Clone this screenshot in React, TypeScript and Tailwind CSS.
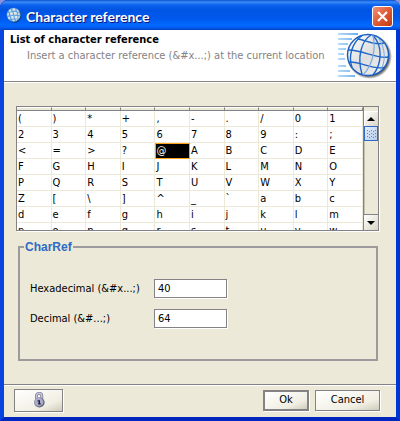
import { useState } from "react";

const FIRST_CODE = 40;
const COLUMNS = 10;
const ROWS = 8;

const rows = Array.from({ length: ROWS }, (_, r) =>
  Array.from({ length: COLUMNS }, (_, c) => FIRST_CODE + r * COLUMNS + c)
);

// speed lines on the left of the header globe: [y, x end]
const streaks = [
  [2, 20],
  [7, 14],
  [12, 10],
  [17, 8],
  [22, 6],
  [27, 7],
  [34, 8],
  [39, 12],
  [44, 17],
];

function TitleGlobe() {
  return (
    <svg viewBox="0 0 16 16" className="h-4 w-4 shrink-0" aria-hidden="true">
      <circle cx="8.6" cy="8.8" r="7" fill="#10408c" />
      <circle cx="7.6" cy="7.8" r="7" fill="#5f9fdc" />
      <g fill="#dfe8ea">
        <path d="M3 3.4 5 2l.4 2-2.2 1.2zM6.4 1.6 9 1.4l.6 2-3 .4zM10.4 2l2 1.4.6 1.8-2-1z" />
        <path d="M1.2 6.4 2.6 5.8 3 8.2 1.4 8.8zM4 5.6l2.4-.6.6 2.8-2.6.4zM7.6 4.8l2.8.2.8 2.6-3 .2zM11.6 5.6l1.8.8.4 2-1.6-.6z" />
        <path d="M1.8 10 3.4 9.4l1 2.2-1.4.8zM4.8 9.2l2.6-.4.6 2.6-2.4.4zM8.6 8.8l2.8.2.2 2.4-2.6.2zM12.4 9.2l1.6.2-1 2-.8.2zM6 12.8l2.4-.4.4 1.8-1.6 0zM9.6 12.4l2.2-.4-1.6 1.8z" />
      </g>
    </svg>
  );
}

function HeaderGlobe() {
  return (
    <svg viewBox="0 0 56 50" className="h-[50px] w-14 shrink-0" aria-hidden="true">
      <defs>
        <linearGradient id="streak" x1="0" x2="20" y1="0" y2="0" gradientUnits="userSpaceOnUse">
          <stop offset="0" stopColor="#b9dcf9" />
          <stop offset="1" stopColor="#6aaef0" />
        </linearGradient>
        <linearGradient id="ball" x1="0" x2="1" y1="0" y2="1">
          <stop offset="0" stopColor="#ffffff" />
          <stop offset="0.5" stopColor="#dedede" />
          <stop offset="1" stopColor="#f2f2f2" />
        </linearGradient>
        <radialGradient id="shade">
          <stop offset="0.85" stopColor="#555555" />
          <stop offset="1" stopColor="#555555" stopOpacity="0" />
        </radialGradient>
      </defs>
      {streaks.map(([y, end]) => (
        <rect key={y} x="0" y={y - 1} width={end} height="2" fill="url(#streak)" />
      ))}
      <circle cx="31.5" cy="24.5" r="22.5" fill="url(#shade)" />
      <circle cx="30" cy="23" r="20.5" fill="url(#ball)" stroke="#1a5fc0" strokeWidth="1.4" />
      <g fill="none" stroke="#1d66c8" strokeWidth="1.4">
        <path d="M19 7C26 7 36 14 46 11" />
        <path d="M10 18C22 17 38 27 50 25" />
        <path d="M11 30C22 29 34 38 46 35.500" />
        <path d="M33 3C23 9 19 26 24 42" />
        <path d="M24 3.500C14 11 10 24 14 35.500" />
        <path d="M35 3.500C45 14 44 32 35 43" />
      </g>
      <path d="M35 3.500C38 16 35 33 25 43" fill="none" stroke="#7aa9e0" strokeWidth="1.200" />
      <path d="M40 5.500C48 16 48 31 42 39" fill="none" stroke="#7aa9e0" strokeWidth="1" />
    </svg>
  );
}

function LockIcon() {
  return (
    <svg viewBox="0 0 12 16" className="h-4 w-3" aria-hidden="true">
      <path d="M3.400 8V4a2.700 2.700 0 0 1 5.400 0v4" fill="none" stroke="#77778f" strokeWidth="2.800" />
      <path d="M3.400 8V4a2.700 2.700 0 0 1 5.400 0v4" fill="none" stroke="#c5c5df" strokeWidth="1.400" />
      <ellipse cx="6.400" cy="10.500" rx="5.200" ry="5" fill="#5f5f78" />
      <ellipse cx="5.800" cy="10" rx="4.600" ry="4.400" fill="#a9a9cc" />
      <path d="M4.600 8.200h2.400v3.400h1v1h-3v-1h.6V9.400h-1z" fill="#22222e" />
    </svg>
  );
}

export default function App() {
  const [code, setCode] = useState(64);

  const update = (text: string, base: number) => {
    const value = parseInt(text, base);
    setCode(Number.isNaN(value) ? 0 : value);
  };

  const button =
    "flex items-center justify-center border-[#848284] bg-linear-to-br from-white via-[#f1efe3] via-70% to-[#cfccbb] shadow-[1px_1px_0_#fff]";
  const field =
    "h-[19px] w-[73px] border border-[#848284] bg-white px-[3px] text-[11px] shadow-[1px_1px_0_#fff] outline-none";

  return (
    <div className="min-h-screen bg-[#8a92dc] font-['DejaVu_Sans_Condensed','Liberation_Sans',sans-serif] text-[11px] leading-4 text-black">
      <div className="flex min-h-screen flex-col rounded-t-lg bg-linear-to-r from-[#0019cf] via-[#0855dd] to-[#00138c]">
        <header className="flex h-[30px] items-center gap-1 rounded-t-lg bg-[linear-gradient(#0a4fd0_0,#3c8cf5_2px,#0a62ee_5px,#0054e3_10px,#0058ec_18px,#0268ff_25px,#0262fa_27px,#0042c4_30px)] pr-[7px] pl-[6px]">
          <TitleGlobe />
          <h1 className="grow pt-1 font-['Lato','Liberation_Sans',sans-serif] text-[14px] font-bold text-white [text-shadow:1px_1px_0_#0a1883]">
            Character reference
          </h1>
          <button
            type="button"
            aria-label="Close"
            className="mt-[2px] flex h-[21px] w-[21px] items-center justify-center rounded-[3px] border border-white bg-linear-to-br from-[#ee9077] via-[#e05a33] to-[#c03a10]"
          >
            <svg viewBox="0 0 13 13" className="h-[13px] w-[13px]" aria-hidden="true">
              <path d="M2 2l9 9M11 2l-9 9" stroke="#fff" strokeWidth="2.200" />
            </svg>
          </button>
        </header>

        <div className="flex grow flex-col border-x-4 border-b-4 border-r-[#0036d8] border-b-[#0026c0] border-l-[#0845e0] bg-[#ece9d8]">
          <section className="flex h-[52px] justify-between border-b border-[#848284] bg-white pt-[2px] pr-[2px] pl-[6px] shadow-[0_1px_0_#fff]">
            <div>
              <h2 className="font-bold">List of character reference</h2>
              <p className="pl-[17px] text-[#848284]">
                Insert a character reference (&amp;#x...;) at the current location
              </p>
            </div>
            <HeaderGlobe />
          </section>

          <main className="flex grow flex-col gap-2 pt-6 pr-[17px] pl-3">
            <div className="flex h-[125px] border border-[#848284] shadow-[1px_1px_0_#fff]">
              <div className="min-w-0 grow overflow-hidden bg-white">
                <table className="w-full table-fixed border-collapse">
                  <thead>
                    <tr>
                      {rows[0].map((c) => (
                        <th key={c} className="h-1 p-0">
                          <div className="h-1 border-t border-r border-b border-t-white border-r-[#848284] border-b-[#848284] bg-[#ece9d8]" />
                        </th>
                      ))}
                    </tr>
                  </thead>
                  <tbody>
                    {rows.map((row) => (
                      <tr key={row[0]}>
                        {row.map((c) => (
                          <td key={c} className="p-0" onClick={() => setCode(c)}>
                            <div
                              className={
                                c === code
                                  ? "h-4 border border-[#ffa21a] bg-black leading-[13px] text-white"
                                  : "h-4 border-r border-b border-[#ece9d8] pl-px leading-[15px]"
                              }
                            >
                              {String.fromCharCode(c)}
                            </div>
                          </td>
                        ))}
                      </tr>
                    ))}
                  </tbody>
                </table>
              </div>

              <div className="flex w-[15px] shrink-0 flex-col border-l border-[#848284] pt-1">
                <button
                  type="button"
                  aria-label="Scroll up"
                  className="flex h-[15px] shrink-0 items-center justify-center border-t border-l border-white bg-linear-to-br from-white to-[#d8d5c4]"
                >
                  <svg viewBox="0 0 8 4" className="h-1 w-2" aria-hidden="true">
                    <path d="M0 4 4 0l4 4z" />
                  </svg>
                </button>
                <div className="flex h-[15px] shrink-0 items-center justify-center border border-[#316ac5] bg-linear-to-br from-[#e4eefa] to-[#b4ccec]">
                  <svg viewBox="0 0 10 8" className="h-2 w-[10px]" fill="#5b8ad4" aria-hidden="true">
                    <path d="M1 0h1v1H1zM5 0h1v1H5zM9 0h1v1H9zM3 1h1v1H3zM7 1h1v1H7zM1 3h1v1H1zM5 3h1v1H5zM9 3h1v1H9zM3 4h1v1H3zM7 4h1v1H7zM1 6h1v1H1zM5 6h1v1H5zM9 6h1v1H9zM3 7h1v1H3zM7 7h1v1H7z" />
                  </svg>
                </div>
                <div className="grow border-l border-[#c4c1b2]" />
                <button
                  type="button"
                  aria-label="Scroll down"
                  className="flex h-4 shrink-0 items-center justify-center border-t border-[#848284] bg-linear-to-br from-white to-[#d8d5c4]"
                >
                  <svg viewBox="0 0 8 4" className="h-1 w-2" aria-hidden="true">
                    <path d="M0 0h8L4 4z" />
                  </svg>
                </button>
              </div>
            </div>

            <fieldset className="mr-px ml-[2px] flex flex-col border-2 border-[#9c9a9c] px-[10px] pt-6 pb-[31px]">
              <legend className="-ml-[6px] px-px font-['Liberation_Sans',sans-serif] text-[12px] font-bold text-[#316ac5]">
                CharRef
              </legend>
              <div className="grid grid-cols-[124px_1fr] items-center gap-y-[11px]">
                <label htmlFor="hex">Hexadecimal (&amp;#x...;)</label>
                <input
                  id="hex"
                  className={field}
                  value={code.toString(16)}
                  onChange={(e) => update(e.target.value, 16)}
                />
                <label htmlFor="dec">Decimal (&amp;#...;)</label>
                <input
                  id="dec"
                  className={field}
                  value={code}
                  onChange={(e) => update(e.target.value, 10)}
                />
              </div>
            </fieldset>
          </main>

          <footer className="flex h-[33px] items-center gap-[6px] border-t border-[#848284] pr-4 pb-[2px] pl-[10px] shadow-[inset_0_1px_0_#fff]">
            <button type="button" aria-label="Lock" className={`${button} mr-auto h-[23px] w-[49px] border`}>
              <LockIcon />
            </button>
            <button type="button" className={`${button} h-[21px] w-[46px] border-2`}>
              Ok
            </button>
            <button type="button" className={`${button} h-[21px] w-[65px] border`}>
              Cancel
            </button>
          </footer>
        </div>
      </div>
    </div>
  );
}
